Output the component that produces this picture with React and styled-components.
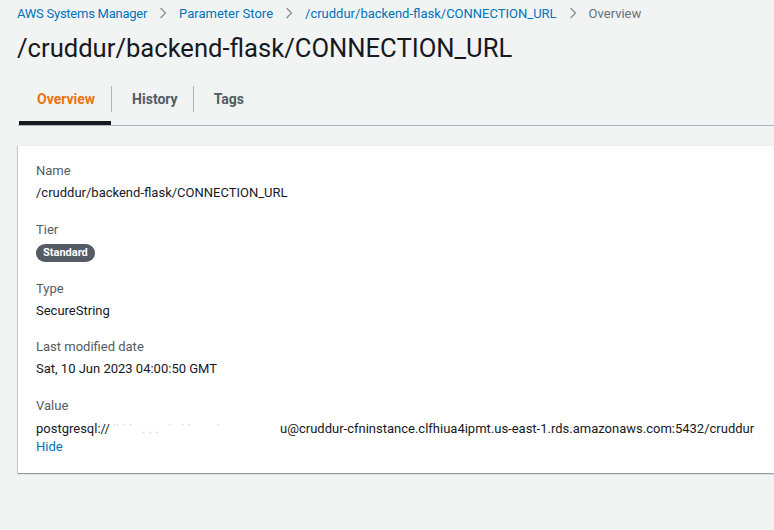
import React from "react";
import styled, { createGlobalStyle } from "styled-components";

const GlobalStyle = createGlobalStyle`
  html, body {
    margin: 0;
    padding: 0;
    background: #f2f3f3;
    font-family: Roboto, "Liberation Sans", Arial, sans-serif;
    color: #16191f;
    overflow: hidden;
  }
`;

const fields = [
  { label: "Name", value: "/cruddur/backend-flask/CONNECTION_URL" },
  { label: "Tier", badge: "Standard" },
  { label: "Type", value: "SecureString" },
  { label: "Last modified date", value: "Sat, 10 Jun 2023 04:00:50 GMT" },
];

function Chevron() {
  return (
    <svg width="8" height="12" viewBox="0 0 8 12">
      <path d="M1.5 1 L6.5 6 L1.5 11" fill="none" stroke="#879596" strokeWidth="1.4" />
    </svg>
  );
}

export default function App() {
  const crumbs = ["AWS Systems Manager", "Parameter Store", "/cruddur/backend-flask/CONNECTION_URL"];
  const tabs = ["Overview", "History", "Tags"];

  return (
    <>
      <GlobalStyle />
      <Page>
        <Breadcrumbs>
          {crumbs.map((c, i) => (
            <React.Fragment key={c}>
              <Crumb narrow={i === 0}>{c}</Crumb>
              <Sep>
                <Chevron />
              </Sep>
            </React.Fragment>
          ))}
          <Crumb current>Overview</Crumb>
        </Breadcrumbs>

        <Title>/cruddur/backend-flask/CONNECTION_URL</Title>

        <TabList>
          {tabs.map((t, i) => (
            <Tab key={t} active={i === 0}>
              <TabLabel active={i === 0} divider={i > 0}>
                {t}
              </TabLabel>
            </Tab>
          ))}
        </TabList>

        <Card>
          {fields.map((f) => (
            <Field key={f.label}>
              <Label>{f.label}</Label>
              {f.badge ? (
                <BadgeRow>
                  <Badge>{f.badge}</Badge>
                </BadgeRow>
              ) : (
                <Value>{f.value}</Value>
              )}
            </Field>
          ))}
          <Field>
            <Label>Value</Label>
            <SecretValue>
              postgresql://{" "}
              <Redacted>{"˙˙ ˙ ˙   . . .   ˙   ˙ ˙        ˙"}</Redacted>
              u@cruddur-cfninstance.clfhiua4ipmt.us-east-1.rds.amazonaws.com:5432/cruddur
            </SecretValue>
            <HideLink>Hide</HideLink>
          </Field>
        </Card>
      </Page>
    </>
  );
}

const Page = styled.div`
  padding: 3px 0 0 18px;
  min-height: 530px;
  box-sizing: border-box;
`;

const Breadcrumbs = styled.nav`
  display: flex;
  align-items: center;
  height: 20px;
  font-size: 13px;
  margin-left: -1px;
`;

const Crumb = styled.span`
  color: ${(p) => (p.current ? "#687078" : "#0073bb")};
  white-space: nowrap;
  letter-spacing: ${(p) => (p.narrow ? "-0.25px" : "0")};
`;

const Sep = styled.span`
  display: flex;
  align-items: center;
  margin: 0 12px 0 12px;
`;

const Title = styled.h1`
  margin: 7px 0 0 -1px;
  font-size: 25.6px;
  line-height: 36px;
  font-weight: 400;
  color: #16191f;
`;

const TabList = styled.div`
  display: flex;
  margin-top: 16px;
  border-bottom: 1px solid #aab7b8;
`;

const Tab = styled.div`
  padding-top: 4px;
  padding-bottom: 9px;
  border-bottom: 4px solid ${(p) => (p.active ? "#16191f" : "transparent")};
  margin-left: ${(p) => (p.active ? "1px" : "0")};
`;

const TabLabel = styled.div`
  height: 26px;
  line-height: 26px;
  padding: 0 ${(p) => (p.divider ? "15px 0 20px" : "16px 0 18px")};
  font-size: 14px;
  font-weight: 700;
  color: ${(p) => (p.active ? "#ec7211" : "#545b64")};
  border-left: 1px solid ${(p) => (p.divider ? "#aab7b8" : "transparent")};
  margin-left: ${(p) => (p.divider ? "0" : "-1px")};
`;

const Card = styled.section`
  margin-top: 19px;
  background: #fff;
  border-top: 1px solid #eaeded;
  box-shadow: 0 1px 1px 0 rgba(0, 28, 36, 0.3), -1px 1px 1px 0 rgba(0, 28, 36, 0.15);
  padding: 14px 0 17px 18px;
  display: flex;
  flex-direction: column;
  gap: 14px;
`;

const Field = styled.div`
  display: flex;
  flex-direction: column;
`;

const Label = styled.div`
  font-size: 13px;
  line-height: 22px;
  color: #545b64;
`;

const Value = styled.div`
  font-size: 13px;
  line-height: 22.5px;
  color: #16191f;
`;

const BadgeRow = styled.div`
  display: flex;
  padding: 3px 0 2px;
`;

const Badge = styled.span`
  display: inline-flex;
  align-items: center;
  height: 18px;
  padding: 0 7px;
  border-radius: 9px;
  background: #545b64;
  color: #fff;
  font-size: 11px;
  font-weight: 700;
`;

const SecretValue = styled.div`
  margin-top: 2px;
  font-size: 13px;
  line-height: 19px;
  color: #16191f;
  white-space: nowrap;
`;

const Redacted = styled.span`
  display: inline-block;
  width: 167px;
  color: #c9ced1;
  white-space: pre;
  overflow: hidden;
  vertical-align: top;
`;

const HideLink = styled.a`
  font-size: 13px;
  line-height: 18px;
  color: #0073bb;
  cursor: pointer;
`;
